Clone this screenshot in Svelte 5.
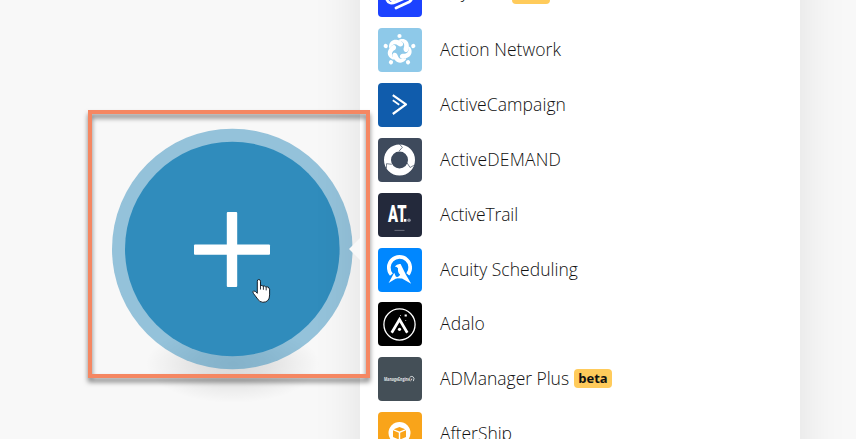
<script>
  const apps = [
    { id: 'abyssale', name: 'Abyssale', bg: '#1c42ff', beta: true, width: 67 },
    { id: 'network', name: 'Action Network', bg: '#8ec9e9', width: 121 },
    { id: 'campaign', name: 'ActiveCampaign', bg: '#105cac', width: 126 },
    { id: 'demand', name: 'ActiveDEMAND', bg: '#3e4a5c', width: 121 },
    { id: 'trail', name: 'ActiveTrail', bg: '#23293b', width: 78 },
    { id: 'acuity', name: 'Acuity Scheduling', bg: '#0087ff', width: 138, tight: true },
    { id: 'adalo', name: 'Adalo', bg: '#000', width: 45 },
    { id: 'manager', name: 'ADManager Plus', bg: '#444f57', beta: true, width: 129 },
    { id: 'ship', name: 'AfterShip', bg: '#f9a41a', width: 72 }
  ];

  function fit(node, width) {
    const text = node.textContent;
    const natural = node.getBoundingClientRect().width;
    node.style.letterSpacing = `${(width - natural) / text.length}px`;
  }
</script>

<main>
  <section class="canvas">
    <svg class="module" width="360" height="439" viewBox="0 0 360 439">
      <defs>
        <radialGradient id="ground">
          <stop offset="0" stop-color="#000" stop-opacity=".13" />
          <stop offset=".4" stop-color="#000" stop-opacity=".09" />
          <stop offset=".75" stop-color="#000" stop-opacity=".035" />
          <stop offset="1" stop-color="#000" stop-opacity="0" />
        </radialGradient>
      </defs>
      <ellipse cx="233" cy="364" rx="87" ry="39" fill="url(#ground)" />
      <circle cx="232.3" cy="249" r="120.3" fill="#308cbc" fill-opacity=".5" />
      <circle cx="232.3" cy="249" r="107.3" fill="#308cbc" />
      <rect x="226.8" y="212" width="10.4" height="75" rx="1" fill="#fff" />
      <rect x="194" y="244.6" width="76" height="10.2" rx="1" fill="#fff" />
      <path d="M257.3 281.2q0-1.7 1.5-1.7t1.7 1.7v4.3q1.8-.5 2.4.6 1.9-.5 2.6.6 3.4-.6 4.1 2.4v5.8q0 7.4-6.8 7.4-3.4 0-5.2-3.4l-4-5.2q-1.7-2.3 0-2.7 1.4-.5 3.7 2.3z" fill="#fff" stroke="#15202b" stroke-width="1" stroke-linejoin="round" />
      <path d="M260.5 285v4.5M263.4 286v3.8M266.2 287v3.4" fill="none" stroke="#15202b" stroke-width=".9" />
    </svg>
  </section>

  <section class="panel">
    <svg class="pointer" width="11" height="22" viewBox="0 0 11 22"><path d="M11 0L0 11l11 11z" fill="#f8f8f8" /></svg>
    <ul>
      {#each apps as app}
        <li class:tight={app.tight}>
          <svg class="logo" viewBox="0 0 44 44" style:background={app.bg}>
            {#if app.id === 'abyssale'}
              <g fill="none" stroke="#fff" stroke-width="2.8" stroke-linejoin="round" stroke-linecap="round">
                <path d="M9 15l16-7 9 7-17 9zM9 24l8 5 17-9M9 27q2 5 9 2l16-7" />
                <path d="M18 35l13-6q3-2 3-5" />
              </g>
            {:else if app.id === 'network'}
              {#each [0, 72, 144, 216, 288] as angle}
                <g transform="rotate({angle} 21.5 22.5)" fill="#fff">
                  <circle cx="21.5" cy="8" r="2.1" />
                  <path d="M11 18.3c.4-4.8 4.3-7.4 8.6-6.2 3.4.6 6 2.3 5.4 4.6-.6 2.1-3.3 2.2-5 .7-2.8-2.2-6-1.2-7.8 2.4-.8.7-1.4-.4-1.2-1.5z" />
                </g>
              {/each}
            {:else if app.id === 'campaign'}
              <path d="M14.8 12.2L28 21.4 14.8 31" fill="none" stroke="#fff" stroke-width="2.2" stroke-linejoin="round" />
              <path d="M14.8 17.3l6.4 4.4" stroke="#fff" stroke-width="1.7" />
            {:else if app.id === 'demand'}
              <circle cx="21.5" cy="22" r="12" fill="none" stroke="#fff" stroke-width="7" />
              <path d="M21.2 6l3.2 3.3-3.3 3.8M35.8 27.3l-3.7 2.2-3-4.5M8.5 30.5v-4.8l5.3.6" fill="none" stroke="#3e4a5c" stroke-width=".7" />
            {:else if app.id === 'trail'}
              <text x="10" y="28.8" textLength="18.5" lengthAdjust="spacingAndGlyphs" class="at">AT</text>
              <path d="M26 26h2.4v2.8H26z" fill="#fff" />
              <circle cx="31" cy="27.2" r="1.8" fill="#8a8f9b" />
              <path d="M16.5 37.4h10" stroke="#858a95" stroke-width=".7" />
            {:else if app.id === 'acuity'}
              <path d="M13.4 26.6A10.7 10.7 0 1 1 29.8 26.4" fill="none" stroke="#fff" stroke-width="3.7" />
              <path d="M16.8 18.6q2.4-3.2 5.8-2.6l5.2 10.4L33.2 35.8 24 30.4q-3.4.2-5.6-1 3-.8 3.8-2.6-2.8-2.2-2.2-6.6-1.2-1.6-3.2-1.6z" fill="#fff" />
              <path d="M10.6 35l5.6-10.2 1.6 3.6 3.4 1.6-3.6.8z" fill="#fff" />
            {:else if app.id === 'adalo'}
              <circle cx="21.5" cy="22.5" r="15.6" fill="none" stroke="#fff" stroke-width="1.3" />
              <path d="M13.7 30.8l7.8-13.3 7.8 13.3" fill="none" stroke="#fff" stroke-width="2.7" />
              <circle cx="21.5" cy="27.3" r="1.6" fill="#fff" />
              <path d="M26.6 12.4h2.2v2.2h-2.2z" fill="#fff" />
              <path d="M22 13h1v1h-1zM27.2 18h1v1h-1z" fill="#aaa" />
            {:else if app.id === 'manager'}
              <text x="6" y="24" textLength="26" lengthAdjust="spacingAndGlyphs" class="engine">ManageEngine</text>
              <path d="M31.6 20.4q1.5-1.6 3.3-.7 2 1 .5 4.4M32.4 24q1.4-.6 1.4-2.4" fill="none" stroke="#dfe2e4" stroke-width=".9" />
            {:else}
              <circle cx="21.5" cy="21" r="11" fill="#fff" />
              <path d="M21.5 15l5.8 2.2-5.8 2.3-5.8-2.3zM15 18.3l5.8 2.4v6.8L15 25zM28 18.3l-5.8 2.4v6.8L28 25z" fill="#f9a41a" />
            {/if}
          </svg>
          <span class="name" use:fit={app.width}>{app.name}</span>
          {#if app.beta}<span class="badge">beta</span>{/if}
        </li>
      {/each}
    </ul>
  </section>
  <div class="frame"></div>
</main>

<style>
  :global(body) { margin: 0; overflow: hidden; }
  main {
    position: relative;
    display: flex;
    width: 856px;
    height: 439px;
    overflow: hidden;
    background: #f8f8f8;
    font-family: "Open Sans", "Noto Sans", sans-serif;
    color: #111;
  }
  .canvas { width: 360px; flex: none; }
  .module { display: block; }
  .panel {
    position: relative;
    display: flow-root;
    width: 440px;
    height: 439px;
    flex: none;
  }
  .panel::before {
    content: "";
    position: absolute;
    inset: -80px 0;
    background: #fff;
    box-shadow: 0 0 45px rgba(0, 0, 0, .1);
  }
  .pointer { position: absolute; left: -11px; top: 238px; }
  ul { position: relative; list-style: none; margin: -27px 0 0; padding: 0 18px; }
  li { display: flex; height: 44px; margin-bottom: 11px; align-items: center; }
  li.tight { margin-bottom: 10px; }
  .logo { display: block; width: 44px; height: 44px; border-radius: 4px; flex: none; margin-right: 18px; }
  .name { font-size: 17.5px; font-weight: 360; line-height: 24px; white-space: nowrap; margin-top: -3px; }
  li:first-child .name { margin-top: -8px; }
  .badge {
    height: 19px;
    width: 38px;
    margin: -1px 0 0 5px;
    border-radius: 4px;
    background: #ffcb5b;
    font-size: 13px;
    font-weight: 700;
    line-height: 19px;
    text-align: center;
  }
  .at { font: 900 23.2px "Roboto", sans-serif; fill: #fff; }
  .engine { font: 700 4.6px "Open Sans", sans-serif; fill: #e2e5e7; }
  .frame {
    position: absolute;
    left: 88px;
    top: 110px;
    box-sizing: border-box;
    width: 282px;
    height: 268px;
    border: 4px solid #f58762;
    filter: drop-shadow(0 4px 2.5px rgba(0, 0, 0, .5));
  }
</style>
